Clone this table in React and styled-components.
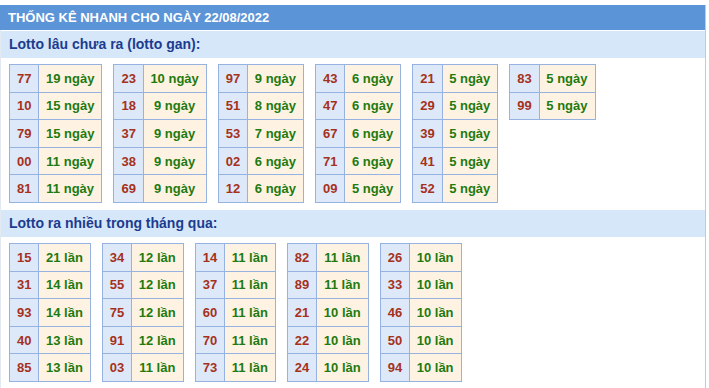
import React from "react";
import styled, { createGlobalStyle } from "styled-components";

const Global = createGlobalStyle`
  html, body { margin: 0; padding: 0; background: #fff; }
  body { font-family: "Liberation Sans", Arial, sans-serif; }
`;

const Panel = styled.div`
  margin-top: 5px;
  width: 704px;
  border-left: 1px solid #e3e9f1;
  border-right: 1px solid #c3cad3;
  box-sizing: content-box;
`;

const Title = styled.div`
  height: 25px;
  line-height: 25px;
  background: #5b94d7;
  color: #fff;
  font-weight: bold;
  font-size: 13px;
  padding-left: 8px;
  margin-left: -1px;
`;

const SubTitle = styled.div`
  height: 27px;
  line-height: 27px;
  margin-top: 1px;
  background: #d6e7fa;
  color: #1c3c8f;
  font-weight: bold;
  font-size: 14px;
  padding-left: 8px;
`;

const Body = styled.div`
  display: flex;
  flex-wrap: wrap;
  align-items: flex-start;
  gap: 11px;
  padding: 6px 0 6px 8px;
`;

const Table = styled.table`
  border-collapse: collapse;
  font-size: 13px;
  font-weight: bold;
`;

const Cell = styled.td`
  border: 1px solid #95b2e0;
  height: 26.6px;
  padding: 0 ${(p) => (p.$num ? "7px" : "7px 0 6.5px")};
  white-space: nowrap;
  background: ${(p) => (p.$num ? "#dde9f9" : "#fef3e2")};
  color: ${(p) => (p.$num ? "#a5311c" : "#1f7a10")};
  text-align: center;
`;

const gan = [
  [["77", "19"], ["10", "15"], ["79", "15"], ["00", "11"], ["81", "11"]],
  [["23", "10"], ["18", "9"], ["37", "9"], ["38", "9"], ["69", "9"]],
  [["97", "9"], ["51", "8"], ["53", "7"], ["02", "6"], ["12", "6"]],
  [["43", "6"], ["47", "6"], ["67", "6"], ["71", "6"], ["09", "5"]],
  [["21", "5"], ["29", "5"], ["39", "5"], ["41", "5"], ["52", "5"]],
  [["83", "5"], ["99", "5"]],
];

const nhieu = [
  [["15", "21"], ["31", "14"], ["93", "14"], ["40", "13"], ["85", "13"]],
  [["34", "12"], ["55", "12"], ["75", "12"], ["91", "12"], ["03", "11"]],
  [["14", "11"], ["37", "11"], ["60", "11"], ["70", "11"], ["73", "11"]],
  [["82", "11"], ["89", "11"], ["21", "10"], ["22", "10"], ["24", "10"]],
  [["26", "10"], ["33", "10"], ["46", "10"], ["50", "10"], ["94", "10"]],
];

function Group({ data, unit }) {
  return (
    <Body>
      {data.map((rows, i) => (
        <Table key={i}>
          <tbody>
            {rows.map(([n, c]) => (
              <tr key={n}>
                <Cell $num>{n}</Cell>
                <Cell>{c} {unit}</Cell>
              </tr>
            ))}
          </tbody>
        </Table>
      ))}
    </Body>
  );
}

export default function App() {
  return (
    <>
      <Global />
      <Panel>
        <Title>THỐNG KÊ NHANH CHO NGÀY 22/08/2022</Title>
        <SubTitle>Lotto lâu chưa ra (lotto gan):</SubTitle>
        <Group data={gan} unit="ngày" />
        <SubTitle>Lotto ra nhiều trong tháng qua:</SubTitle>
        <Group data={nhieu} unit="lần" />
      </Panel>
    </>
  );
}
